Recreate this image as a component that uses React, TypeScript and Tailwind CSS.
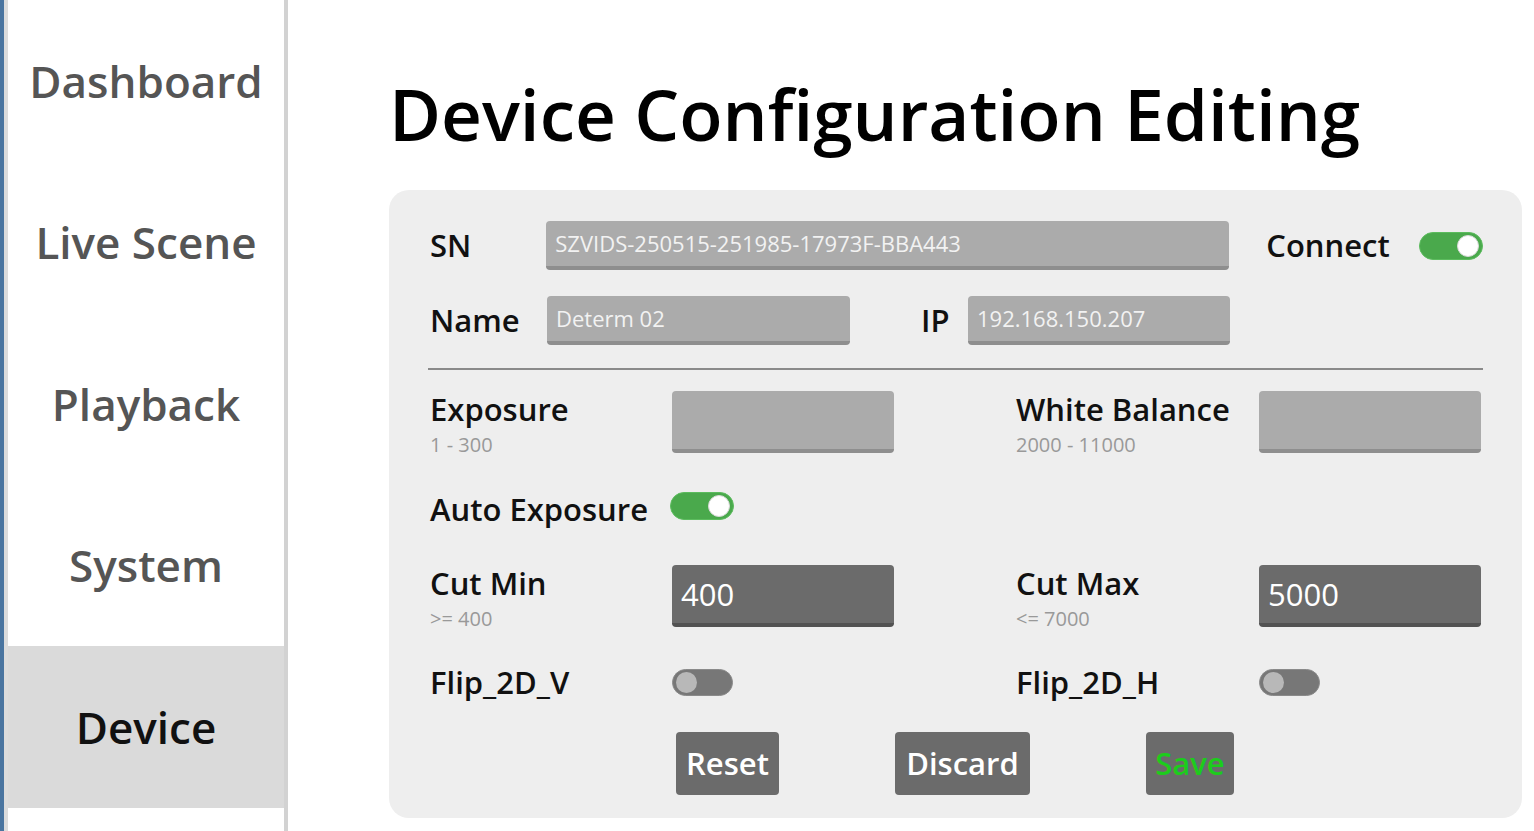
const navItems = ['Dashboard', 'Live Scene', 'Playback', 'System', 'Device'];

function Toggle({ on }: { on: boolean }) {
  return on ? (
    <div className="w-[64px] h-[28px] rounded-full bg-[#4aa94c] border border-[#5cbc5e] flex items-center justify-end pr-[3px]">
      <div className="w-[22px] h-[22px] rounded-full bg-white border border-[#d8d8d8]" />
    </div>
  ) : (
    <div className="w-[61px] h-[27px] rounded-full bg-[#777777] border border-[#8a8a8a] flex items-center justify-start pl-[3px]">
      <div className="w-[21px] h-[21px] rounded-full bg-[#b8b8b8]" />
    </div>
  );
}

function Field({ value, w, h = 'h-[49px]', dark }: { value?: string; w: string; h?: string; dark?: boolean }) {
  return (
    <div
      className={`${w} ${h} shrink-0 rounded-[4px] border-b-[4px] flex items-center px-[9px] font-medium ${
        dark ? 'bg-[#6b6b6b] border-[#525252] text-white text-[31px]' : 'bg-[#ababab] border-[#8e8e8e] text-[#f2f2f2] text-[22px]'
      }`}
    >
      {value}
    </div>
  );
}

function Labeled({ label, hint }: { label: string; hint?: string }) {
  return (
    <div className="flex flex-col">
      <span className="text-[31px] leading-[36px] font-semibold text-[#111]">{label}</span>
      {hint && <span className="mt-[4px] text-[20px] leading-[28px] text-[#999]">{hint}</span>}
    </div>
  );
}

export default function App() {
  return (
    <div className="h-screen w-full flex bg-white overflow-hidden" style={{ fontFamily: '"Open Sans", "Noto Sans", sans-serif' }}>
      <div className="w-[4px] shrink-0 bg-[#4a75a0]" />
      <aside className="w-[284px] shrink-0 border-l-[4px] border-[#dcdcdc] border-r-[4px] border-r-[#d2d2d2] flex flex-col bg-white">
        {navItems.map((item) => (
          <div
            key={item}
            className={`h-[161.5px] flex items-center justify-center text-[44px] font-semibold ${
              item === 'Device' ? 'bg-[#dadada] text-[#111]' : 'text-[#555]'
            }`}
          >
            {item}
          </div>
        ))}
      </aside>

      <main className="flex-1 min-w-0 flex flex-col pl-[101px] pr-[12px]">
        <h1 className="mt-[66px] h-[95px] text-[71px] leading-[95px] font-semibold text-black whitespace-nowrap">Device Configuration Editing</h1>
        <section className="mt-[29px] h-[628px] rounded-[20px] bg-[#eeeeee] px-[39px] pt-[31px] flex flex-col">
          <div className="flex items-center">
            <span className="w-[119px] pl-[2px] text-[31px] font-semibold text-[#111]">SN</span>
            <Field w="w-[683px]" value="SZVIDS-250515-251985-17973F-BBA443" />
            <span className="ml-[37px] w-[154px] text-[31px] font-semibold text-[#111]">Connect</span>
            <Toggle on />
          </div>
          <div className="flex items-center mt-[26px]">
            <span className="w-[119px] pl-[2px] text-[31px] font-semibold text-[#111]">Name</span>
            <Field w="w-[303px]" value="Determ 02" />
            <span className="ml-[71px] w-[47px] text-[31px] font-semibold text-[#111]">IP</span>
            <Field w="w-[262px]" value="192.168.150.207" />
          </div>
          <div className="mt-[23px] h-[2px] bg-[#8a8a8a] w-[1055px]" />

          <div className="flex mt-[21px] pl-[2px]">
            <div className="w-[242px]"><Labeled label="Exposure" hint="1 - 300" /></div>
            <Field w="w-[222px]" h="h-[62px]" />
            <div className="w-[243px] ml-[122px]"><Labeled label="White Balance" hint="2000 - 11000" /></div>
            <Field w="w-[222px]" h="h-[62px]" />
          </div>

          <div className="flex items-center mt-[32px] pl-[2px] h-[36px]">
            <span className="w-[240px] text-[31px] font-semibold text-[#111]">Auto Exposure</span>
            <div className="-mt-[6px]"><Toggle on /></div>
          </div>

          <div className="flex mt-[38px] pl-[2px]">
            <div className="w-[242px]"><Labeled label="Cut Min" hint=">= 400" /></div>
            <Field w="w-[222px]" h="h-[62px]" dark value="400" />
            <div className="w-[243px] ml-[122px]"><Labeled label="Cut Max" hint="<= 7000" /></div>
            <Field w="w-[222px]" h="h-[62px]" dark value="5000" />
          </div>

          <div className="flex items-center mt-[31px] pl-[2px] h-[36px]">
            <span className="w-[242px] text-[31px] font-semibold text-[#111]">Flip_2D_V</span>
            <Toggle on={false} />
            <span className="ml-[283px] w-[243px] text-[31px] font-semibold text-[#111]">Flip_2D_H</span>
            <Toggle on={false} />
          </div>

          <div className="flex items-center mt-[32px] pl-[248px]">
            <button className="w-[103px] h-[63px] rounded-[4px] bg-[#6b6b6b] text-white text-[31px] font-semibold">Reset</button>
            <button className="ml-[116px] w-[135px] h-[63px] rounded-[4px] bg-[#6b6b6b] text-white text-[31px] font-semibold">Discard</button>
            <button className="ml-[116px] w-[88px] h-[63px] rounded-[4px] bg-[#6b6b6b] text-[#1ccc1c] text-[31px] font-semibold">Save</button>
          </div>
        </section>
      </main>
    </div>
  );
}
